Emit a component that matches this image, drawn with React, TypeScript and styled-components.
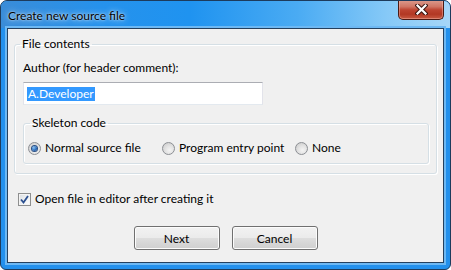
import React from 'react';
import styled, { createGlobalStyle } from 'styled-components';

const GlobalStyle = createGlobalStyle`
  html, body {
    margin: 0;
    padding: 0;
    background: #ffffff;
  }
  body {
    font-family: Lato, "Noto Sans", sans-serif;
    font-size: 12px;
    color: #000;
  }
`;

const Window = styled.div`
  width: 451px;
  height: 270px;
  box-sizing: border-box;
  display: flex;
  flex-direction: column;
  border: 1px solid #1d3b5c;
  border-radius: 7px 7px 6px 6px;
  background: #2390ec;
  overflow: hidden;
`;

const TitleBar = styled.div`
  height: 27px;
  flex: none;
  display: flex;
  align-items: flex-start;
  padding-left: 7px;
  background: linear-gradient(90deg, #3a8cd8 0%, #2692ec 22%, #1f93f0 42%, #4aabf3 66%, #86c9f7 86%, #a6d6f8 100%);
`;

const Title = styled.span`
  margin-top: 7px;
  font-size: 12px;
  line-height: 16px;
  color: #000;
  text-shadow: 0 0 6px rgba(255, 255, 255, 0.9), 0 0 2px rgba(255, 255, 255, 0.8);
`;

const CloseButton = styled.button`
  margin: -1px 6px 0 auto;
  width: 46px;
  height: 20px;
  padding: 0;
  border: 1px solid #4a1a14;
  border-top: none;
  border-radius: 0 0 5px 5px;
  background: linear-gradient(180deg, #dc9c8e 0%, #cf7564 35%, #bd4431 52%, #b23824 75%, #c85a42 100%);
  box-shadow: inset 0 0 0 1px rgba(255, 200, 190, 0.4);
  display: flex;
  align-items: center;
  justify-content: center;
`;

const Client = styled.div`
  flex: 1;
  margin: 0 6px 6px 6px;
  border: 1px solid #24405e;
  box-shadow: 0 0 0 2px #6db8f3;
  background: #f0f0f0;
  padding: 7px 6px 0 6px;
  display: flex;
  flex-direction: column;
`;

const Group = styled.fieldset<{ $inner?: boolean }>`
  margin: 0;
  border: 1px solid #d5dfe5;
  border-radius: 3px;
  box-shadow: inset 1px 1px 0 #ffffff, 1px 1px 0 #ffffff;
  padding: ${p => (p.$inner ? '0 4px 7px 4px' : '0 7px 9px 8px')};
  min-width: 0;
`;

const Legend = styled.legend<{ $inner?: boolean }>`
  padding: 0 2px;
  margin-left: ${p => (p.$inner ? '2px' : '-3px')};
  line-height: 16px;
`;

const Label = styled.div`
  margin-top: 8px;
  line-height: 16px;
`;

const TextBox = styled.div`
  margin-top: 6px;
  width: 240px;
  height: 23px;
  box-sizing: border-box;
  background: #ffffff;
  border: 1px solid #e2e3ea;
  border-top-color: #abadb3;
  border-bottom-color: #e3e9ef;
  padding: 0 0 0 3px;
  display: flex;
  align-items: center;
`;

const Selected = styled.span`
  background: #3399ff;
  color: #ffffff;
  line-height: 14px;
  padding: 0 1px;
`;

const SkeletonGroup = styled(Group)`
  margin-top: 10px;
`;

const RadioRow = styled.div`
  margin-top: 9px;
  display: grid;
  grid-template-columns: 134px 133px auto;
  align-items: center;
`;

const RadioItem = styled.label`
  display: flex;
  align-items: center;
  gap: 4px;
  line-height: 16px;
`;

const RadioCircle = styled.span<{ $checked?: boolean }>`
  width: 13px;
  height: 13px;
  box-sizing: border-box;
  border-radius: 50%;
  border: 1px solid #8c8f94;
  background: radial-gradient(circle at 60% 65%, #f4f4f4 0%, #e2e2e2 45%, #c6c6c6 100%);
  display: flex;
  align-items: center;
  justify-content: center;
  flex: none;

  &::after {
    content: '';
    display: ${p => (p.$checked ? 'block' : 'none')};
    width: 5px;
    height: 5px;
    border-radius: 50%;
    background: radial-gradient(circle at 35% 35%, #8cc4f2 0%, #2c6fbf 55%, #1a3f7a 100%);
    box-shadow: 0 0 0 1px #2a4f84;
  }
`;

const CheckRow = styled.label`
  margin: 17px 0 0 4px;
  display: flex;
  align-items: center;
  gap: 4px;
  line-height: 16px;
`;

const CheckBox = styled.span`
  width: 13px;
  height: 13px;
  box-sizing: border-box;
  border: 1px solid #8e8f8f;
  background: linear-gradient(135deg, #d8dcdf 0%, #eef0f2 50%, #ffffff 100%);
  box-shadow: inset 0 0 0 1px #f4f4f4;
  display: flex;
  align-items: center;
  justify-content: center;
  flex: none;
`;

const ButtonRow = styled.div`
  margin-top: 19px;
  display: flex;
  justify-content: center;
  gap: 12px;
`;

const Button = styled.button`
  width: 86px;
  height: 24px;
  box-sizing: border-box;
  border: 1px solid #707070;
  border-radius: 3px;
  background: linear-gradient(180deg, #f2f2f2 0%, #ebebeb 48%, #dddddd 52%, #cfcfcf 100%);
  box-shadow: inset 0 0 0 1px #fcfcfc;
  font-family: inherit;
  font-size: 12px;
  color: #000;
  padding: 0;
`;

export default function App() {
  return (
    <>
      <GlobalStyle />
      <Window>
        <TitleBar>
          <Title>Create new source file</Title>
          <CloseButton aria-label="Close">
            <svg width="13" height="11" viewBox="0 0 13 11">
              <path d="M2.5 1.5 L10.5 9.5 M10.5 1.5 L2.5 9.5" stroke="#3a1410" strokeWidth="4.2" strokeLinecap="square" />
              <path d="M2.5 1.5 L10.5 9.5 M10.5 1.5 L2.5 9.5" stroke="#ffffff" strokeWidth="2.2" strokeLinecap="square" />
            </svg>
          </CloseButton>
        </TitleBar>
        <Client>
          <Group>
            <Legend>File contents</Legend>
            <Label>Author (for header comment):</Label>
            <TextBox>
              <Selected>A.Developer</Selected>
            </TextBox>
            <SkeletonGroup $inner>
              <Legend $inner>Skeleton code</Legend>
              <RadioRow>
                <RadioItem>
                  <RadioCircle $checked />
                  Normal source file
                </RadioItem>
                <RadioItem>
                  <RadioCircle />
                  Program entry point
                </RadioItem>
                <RadioItem>
                  <RadioCircle />
                  None
                </RadioItem>
              </RadioRow>
            </SkeletonGroup>
          </Group>
          <CheckRow>
            <CheckBox>
              <svg width="9" height="9" viewBox="0 0 9 9">
                <path d="M1 4.5 L3.5 7.5 L8 1" fill="none" stroke="#2b4f8f" strokeWidth="1.8" />
              </svg>
            </CheckBox>
            Open file in editor after creating it
          </CheckRow>
          <ButtonRow>
            <Button>Next</Button>
            <Button>Cancel</Button>
          </ButtonRow>
        </Client>
      </Window>
    </>
  );
}
